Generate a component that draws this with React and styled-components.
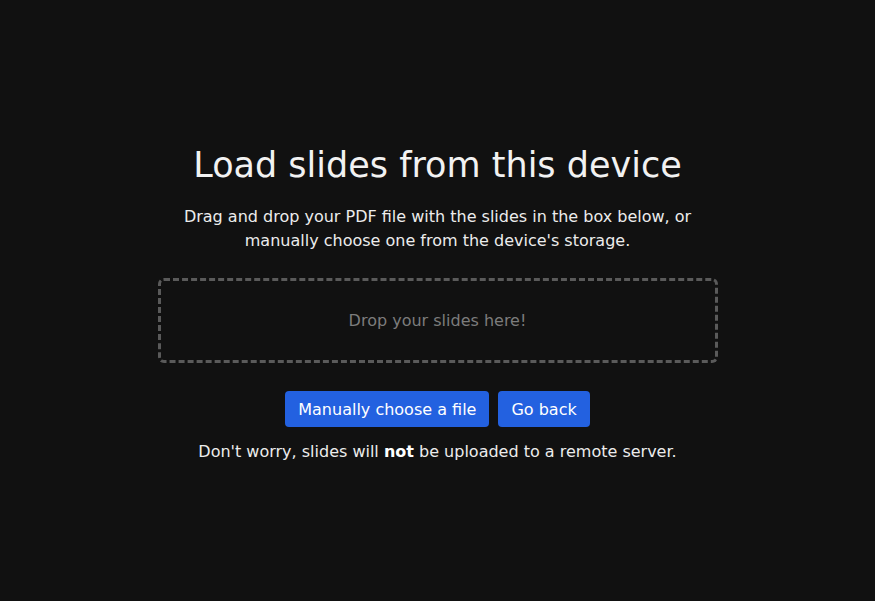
import React from "react";
import styled, { createGlobalStyle } from "styled-components";

const GlobalStyle = createGlobalStyle`
	html, body {
		margin: 0;
		padding: 0;
		background: #111111;
	}
	body {
		font-family: "DejaVu Sans", Verdana, sans-serif;
		color: #ececec;
	}
`;

const Page = styled.main`
	box-sizing: border-box;
	min-height: 100vh;
	padding-top: 6px;
	display: flex;
	flex-direction: column;
	align-items: center;
	justify-content: center;
	text-align: center;
`;

const Title = styled.h1`
	font-size: 35px;
	font-weight: 400;
	line-height: 44px;
	margin: 0 0 18px;
	color: #f2f2f2;
`;

const Lead = styled.p`
	font-size: 16px;
	line-height: 24px;
	margin: 0 0 25px;
	max-width: 520px;
`;

const DropZone = styled.div`
	box-sizing: border-box;
	width: 560px;
	height: 85px;
	border: 3px dashed #5a5a5a;
	border-radius: 6px;
	display: flex;
	align-items: center;
	justify-content: center;
	color: #7c7c7c;
	font-size: 16px;
	margin-bottom: 28px;
`;

const Actions = styled.div`
	display: flex;
	gap: 9px;
	margin-bottom: 13px;
`;

const Button = styled.button`
	font-family: inherit;
	font-size: 16px;
	height: 36px;
	padding: 0 13px;
	border: none;
	border-radius: 4px;
	background: #2361e0;
	color: #ffffff;
	cursor: pointer;
`;

const Note = styled.p`
	font-size: 16px;
	line-height: 24px;
	margin: 0;
	b {
		font-weight: 700;
		color: #ffffff;
	}
`;

export default function App() {
	return (
		<>
			<GlobalStyle />
			<Page>
				<Title>Load slides from this device</Title>
				<Lead>
					Drag and drop your PDF file with the slides in the box below, or
					manually choose one from the device's storage.
				</Lead>
				<DropZone>Drop your slides here!</DropZone>
				<Actions>
					<Button>Manually choose a file</Button>
					<Button>Go back</Button>
				</Actions>
				<Note>
					Don't worry, slides will <b>not</b> be uploaded to a remote server.
				</Note>
			</Page>
		</>
	);
}
